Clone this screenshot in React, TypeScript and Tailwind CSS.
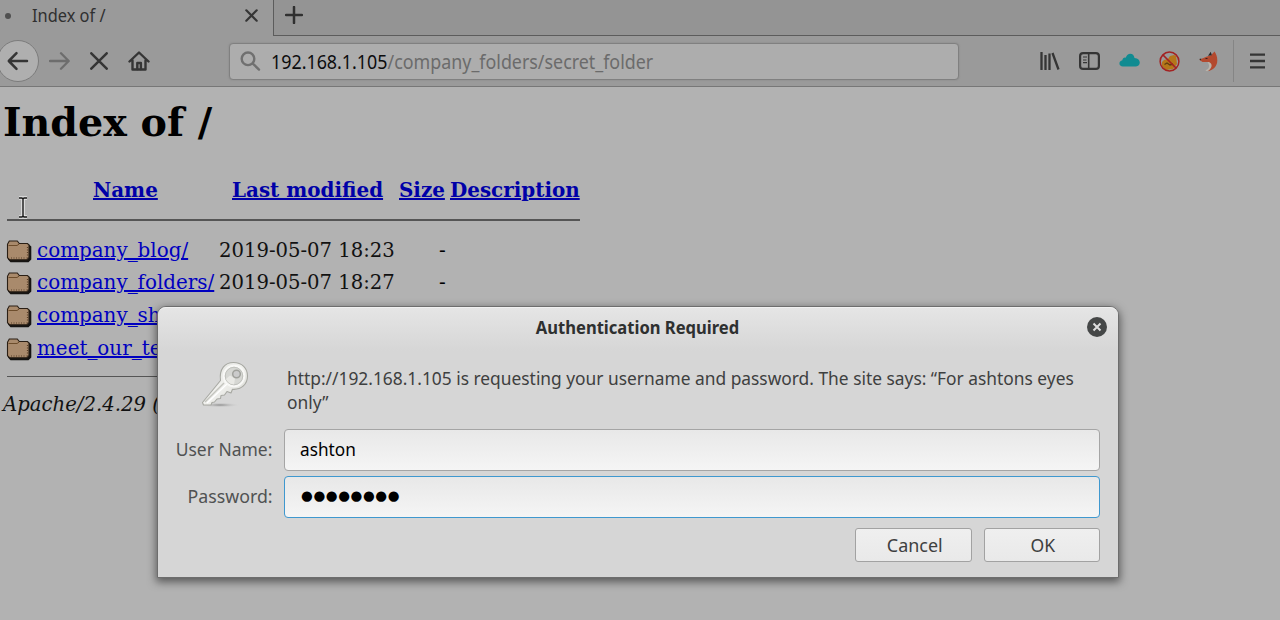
import type { ReactNode } from "react";

const folders = [
  { name: "company_blog/", date: "2019-05-07 18:23" },
  { name: "company_folders/", date: "2019-05-07 18:27" },
  { name: "company_share/", date: "2019-05-07 18:22" },
  { name: "meet_our_team/", date: "2019-05-07 18:34" },
];

function Text({ className = "", children }: { className?: string; children: ReactNode }) {
  return <span className={`inline-block origin-left whitespace-pre ${className}`}>{children}</span>;
}

function FolderIcon() {
  return (
    <svg className="relative top-px" width="26" height="24" viewBox="0 0 26 24">
      <path d="M3.500 5 5 3h7l1.500 2.500h9.500l2.300 2v13l-2.800 2.800H4.500l-2.500-2.800z" fill="#161412" />
      <path d="M1.500 5.300 3.300 2h8l2 2.500h8.200l1.500 1.500v12.500l-2 2.200H3.500l-2-2z" fill="#a98a6c" stroke="#2a1f15" strokeWidth="1.100" />
      <path d="M2.500 6.500h8.500l2-1.300" fill="none" stroke="#6d4d2c" strokeWidth="1" />
      <path d="M5 19h15.500M21.500 8v10.500" fill="none" stroke="#5a4029" strokeWidth="1.200" strokeDasharray="1 1.500" />
    </svg>
  );
}

function KeyIcon() {
  return (
    <svg width="52" height="50" viewBox="0 0 52 50">
      <defs>
        <linearGradient id="metal" x1="0" y1="0" x2="1" y2="1">
          <stop offset="0" stopColor="#dddeda" />
          <stop offset=".5" stopColor="#f1f1ee" />
          <stop offset="1" stopColor="#d0d1cb" />
        </linearGradient>
        <radialGradient id="shade">
          <stop offset="0" stopColor="#8b8b8b" />
          <stop offset="1" stopColor="#d6d6d6" stopOpacity="0" />
        </radialGradient>
      </defs>
      <ellipse cx="20" cy="46" rx="20" ry="2.500" fill="url(#shade)" />
      <path
        d="M20.500 21.500C19 10 25 3.500 33.500 3.500c8.500 0 14 6 14 13.500 0 8-6 14-15 13.300l-1.500 3.700-4-1.500-2.500 3.500-3.500.5-.5 3-3.500.5-2.500 3-2.500.5-1 2.500H3.500l-1-2.500z"
        fill="url(#metal)"
        stroke="#a7a8a2"
        strokeWidth="1.100"
        strokeLinejoin="round"
      />
      <path d="M5 43 24 24" stroke="#c3c4be" strokeWidth="1.500" />
      <path d="M7 44 27 25" stroke="#fff" strokeWidth="1.200" />
      <circle cx="34" cy="17" r="10.200" fill="#d6d7d3" stroke="#f8f8f6" strokeWidth="2" />
      <circle cx="34" cy="17" r="8.800" fill="none" stroke="#babbb6" strokeWidth=".8" />
      <path d="M26 20a9 9 0 0 0 8 5.500l1-6-5-3z" fill="#e9e9e5" />
      <circle cx="36.500" cy="15" r="3.800" fill="#cbcbcb" stroke="#a0a19c" strokeWidth="1.500" />
    </svg>
  );
}

function Toolbar() {
  return (
    <div className="flex h-[51px] items-center border-b border-[#777777] bg-[#9a9a9a]">
      <div className="-ml-[3px] flex h-[42px] w-[42px] shrink-0 items-center justify-center rounded-full border border-[#7c7c7c] bg-[#afafaf]">
        <svg width="22" height="20" viewBox="0 0 22 20" fill="none" stroke="#353535" strokeWidth="2.500" strokeLinecap="round" strokeLinejoin="round">
          <path d="M20 10H2M9.500 2.200 1.800 10l7.700 7.800" />
        </svg>
      </div>
      <svg className="ml-[10px] shrink-0" width="22" height="20" viewBox="0 0 22 20" fill="none" stroke="#6d6d6d" strokeWidth="2.300" strokeLinecap="round" strokeLinejoin="round">
        <path d="M1 10h18.500M12 2.200l7.700 7.800-7.700 7.800" />
      </svg>
      <svg className="ml-[19px] shrink-0" width="18" height="18" viewBox="0 0 18 18" stroke="#353535" strokeWidth="2.500" strokeLinecap="round">
        <path d="M1.300 1.300l15.400 15.400M16.700 1.300 1.300 16.700" />
      </svg>
      <svg className="ml-[20px] shrink-0" width="22" height="20" viewBox="0 0 22 20" fill="none" stroke="#353535" strokeWidth="2.400" strokeLinejoin="round" strokeLinecap="round">
        <path d="M1.500 10.500 11 1.500l9.500 9M4.500 9.500v9h13v-9" />
        <path d="M9.300 18v-6h3.600v6" strokeWidth="2.400" />
      </svg>
      <div className="ml-[79px] flex h-[37px] w-[730px] shrink-0 items-center rounded-[4px] border border-[#808080] bg-[#adadad] pl-[10px] shadow-[0_0_2px_#858585]">
        <svg width="22" height="21" viewBox="0 0 22 21" fill="none" stroke="#707070" strokeWidth="2.400" strokeLinecap="round">
          <circle cx="8" cy="7.800" r="6.300" />
          <path d="M12.800 12.600l6.200 6" />
        </svg>
        <Text className="relative top-px ml-[9px] w-[440px] scale-x-[0.893] text-[20px] leading-6 text-[#6b6b6b]">
          <span className="text-[#0c0c0d]">192.168.1.105</span>/company_folders/secret_folder
        </Text>
      </div>
      <div className="ml-auto flex h-full shrink-0 items-center">
        <svg width="20" height="18" viewBox="0 0 20 18" fill="none" stroke="#353535" strokeWidth="2.300">
          <path d="M1.500 0v18M5.500 3v15M9.500 1.500V18M12.500 1l6 16.500" />
        </svg>
        <svg className="ml-[19px]" width="21" height="18" viewBox="0 0 21 18" fill="none" stroke="#353535" strokeWidth="2.200">
          <rect x="1.100" y="1.100" width="18.800" height="15.800" rx="3" />
          <path d="M9.700 1v16" strokeWidth="1.600" />
          <path d="M4 5h4M4 8h3.500M4 10.700h4" strokeWidth="1.200" />
        </svg>
        <svg className="relative -top-px ml-[19px]" width="21" height="14" viewBox="0 0 21 14" fill="#118b91">
          <path d="M4 13.500C-.5 13.500-.8 8 3.400 7.300 3.500 5 5.300 4.200 6.800 4.700 8.200-.8 15-.4 15.500 5c7 .2 6.500 8.500 1.500 8.500z" />
        </svg>
        <svg className="ml-[19px]" width="21" height="21" viewBox="0 0 21 21">
          <path d="M3 11 5 9l4-1 2-3 4-1 2 1 1 8-4 5-7 1-4-4z" fill="#b5761a" />
          <path d="M5.500 13.500 8 12l3 2 3-1" fill="none" stroke="#633c0f" strokeWidth="1.400" />
          <circle cx="10.500" cy="10.500" r="9.400" fill="none" stroke="#a32222" strokeWidth="1.500" />
          <path d="M4 4l13 13" stroke="#a32222" strokeWidth="1.700" />
        </svg>
        <svg className="ml-[19px]" width="20" height="21" viewBox="0 0 20 21">
          <path d="M15.500.5c1.500 2.500 2.800 4.500 2.800 9 0 6-4.300 9.500-9.800 10.800 4-3 4.500-6.300 1.500-9.300H3.500L.3 8.700 8 5.500l4-1.300z" fill="#b3492e" />
          <path d="M8.500 20.300c-2 0-2.500-.8-1-1.500 3-1.500 3.500-4.500 1-7.800 5 0 6 5.500 0 9.300z" fill="#b9b3aa" />
          <path d="M9 4.700 11.800.7l1 3.600zM.3 7.900l2-.3-.6 2z" fill="#282828" />
          <path d="M6.500 7.500h2" stroke="#3b211a" strokeWidth="1" />
        </svg>
        <div className="ml-[14px] h-[42px] w-px bg-[#858585]" />
        <svg className="mr-[15px] ml-[16px]" width="15" height="16" viewBox="0 0 15 16" stroke="#353535" strokeWidth="2.400">
          <path d="M0 1.600h15M0 8h15M0 14.400h15" />
        </svg>
      </div>
    </div>
  );
}

function DirectoryListing() {
  return (
    <main className="h-[533px] font-['DejaVu_Serif',serif] text-[20px] text-black">
      <h1 className="mb-1 flex h-[70px] items-center pl-[3px] text-[40px] font-bold">
        <Text className="scale-x-[0.99]">Index of /</Text>
      </h1>
      <div className="flex h-[58px] items-center pb-px font-bold text-[#0000a8]">
        <span className="ml-[93px] w-[139px]"><Text className="scale-x-[0.995] underline">Name</Text></span>
        <span className="w-[167px]"><Text className="scale-x-[0.995] underline">Last modified</Text></span>
        <span className="w-[51px]"><Text className="scale-x-[0.995] underline">Size</Text></span>
        <Text className="scale-x-[0.995] underline">Description</Text>
      </div>
      <div className="ml-[7px] h-[1.5px] w-[573px] bg-[#555555]" />
      <div className="pt-[13px]">
        {folders.map((f) => (
          <div key={f.name} className="flex h-[32.6px] items-center pl-[6px]">
            <FolderIcon />
            <span className="ml-[5px] w-[182px]">
              <Text className="scale-x-[0.995] text-[#0000c0] underline">{f.name}</Text>
            </span>
            <span className="w-[220px]">
              <Text className="scale-x-[0.98] text-[#111]">{f.date}</Text>
            </span>
            <Text>-</Text>
          </div>
        ))}
      </div>
      <div className="mt-[12px] ml-[7px] h-[1.5px] w-[573px] bg-[#555555]" />
      <address className="mt-[12px] pl-[3px] leading-[30px] text-[#111]">
        <Text className="scale-x-[0.983]">Apache/2.4.29 (Ubuntu)</Text>
      </address>
    </main>
  );
}

function Dialog() {
  return (
    <section className="absolute top-[306px] left-[157px] h-[272px] w-[962px] rounded-t-[9px] border border-[#6d6d6d] bg-[#d6d6d6] text-[18.5px] text-[#3e4040] shadow-[0_3px_9px_1px_rgba(0,0,0,0.5)]">
      <header className="relative flex h-[44px] items-center justify-center rounded-t-[8px] border-t border-[#f0f0f0] bg-linear-to-b from-[#e5e5e5] to-[#d6d6d6] pb-[5px]">
        <span className="scale-x-[0.92] text-[18px] font-bold whitespace-nowrap text-[#2e3030]">Authentication Required</span>
        <svg className="absolute top-[9px] right-[11px]" width="20" height="20" viewBox="0 0 20 20">
          <circle cx="10" cy="10" r="10" fill="#454747" />
          <path d="M6.500 6.500l7 7M13.500 6.500l-7 7" stroke="#dedede" strokeWidth="2" />
        </svg>
      </header>
      <div className="flex h-[78px] pl-[42px]">
        <div className="pt-[8px]"><KeyIcon /></div>
        <div className="flex flex-col items-start pt-[15px] pl-[35px] leading-6">
          <Text className="w-[830px] scale-x-[0.938]">http://192.168.1.105 is requesting your username and password. The site says: “For ashtons eyes</Text>
          <Text className="scale-x-[0.938]">only”</Text>
        </div>
      </div>
      <div className="flex h-[42px] items-center">
        <div className="w-[114px] pb-[2px] text-right"><span className="inline-block origin-right scale-x-[0.945] text-[#505252]">User Name:</span></div>
        <div className="ml-[12px] flex h-[42px] w-[816px] items-center rounded-[4px] border-[1.5px] border-[#a5a5a5] bg-linear-to-b from-[#e8e8e8] to-[#f5f5f5] pb-[2px] pl-[15px] text-black">
          <Text className="scale-x-[0.93]">ashton</Text>
        </div>
      </div>
      <div className="mt-[5px] flex h-[42px] items-center">
        <div className="w-[115px] pb-[2px] text-right"><span className="inline-block origin-right scale-x-[0.96] text-[#505252]">Password:</span></div>
        <div className="ml-[11px] flex h-[42px] w-[816px] items-center rounded-[4px] border-[1.5px] border-[#3f98cf] bg-linear-to-b from-[#e8e8e8] to-[#f5f5f5] pb-[3px] pl-[16px] font-['DejaVu_Sans',sans-serif] text-[13.5px] text-black">
          <Text className="tracking-[0.6px]">●●●●●●●●</Text>
        </div>
      </div>
      <footer className="mt-[10px] flex justify-end gap-[12px] pr-[18px]">
        <button className="h-[34px] w-[117px] rounded-[3px] border-[1.5px] border-[#a2a2a2] bg-linear-to-b from-[#efefef] to-[#e9e9e9]">
          <span className="inline-block scale-x-[0.97] pl-[2px]">Cancel</span>
        </button>
        <button className="h-[34px] w-[116px] rounded-[3px] border-[1.5px] border-[#a2a2a2] bg-linear-to-b from-[#efefef] to-[#e9e9e9]">
          <span className="inline-block scale-x-[0.95] pl-[2px]">OK</span>
        </button>
      </footer>
    </section>
  );
}

export default function App() {
  return (
    <div className="relative h-[620px] w-[1280px] overflow-hidden bg-[#b2b2b2] font-['Noto_Sans',sans-serif]">
      <div className="flex h-[36px] bg-[#9a9a9a]">
        <div className="flex h-[31px] w-[273px] items-center">
          <div className="ml-[5px] h-[6px] w-[6px] rounded-full bg-[#505050]" />
          <Text className="ml-[21px] w-[213px] scale-x-[0.91] text-[18px] text-[#303030]">Index of /</Text>
          <svg width="13" height="13" viewBox="0 0 13 13" stroke="#353535" strokeWidth="2.200" strokeLinecap="round">
            <path d="M1.300 1.300l10.400 10.400M11.700 1.300 1.300 11.700" />
          </svg>
        </div>
        <div className="flex-1 border-b border-l border-[#5c5c5c] bg-[#949494] pt-[6px] pl-[11px]">
          <svg width="18" height="18" viewBox="0 0 18 18" stroke="#303030" strokeWidth="2.500" strokeLinecap="round">
            <path d="M9 1v16M1 9h16" />
          </svg>
        </div>
      </div>
      <Toolbar />
      <DirectoryListing />
      <Dialog />
      <svg className="absolute top-[196px] left-[18px]" width="10" height="23" viewBox="0 0 10 23" fill="none">
        <path d="M1 2h3l1 1 1-1h3M5 3v17M1 21h3l1-1 1 1h3" stroke="#e5e5e5" strokeWidth="3.600" />
        <path d="M1 2h3l1 1 1-1h3M5 3v17M1 21h3l1-1 1 1h3" stroke="#171717" strokeWidth="1.400" />
      </svg>
    </div>
  );
}
